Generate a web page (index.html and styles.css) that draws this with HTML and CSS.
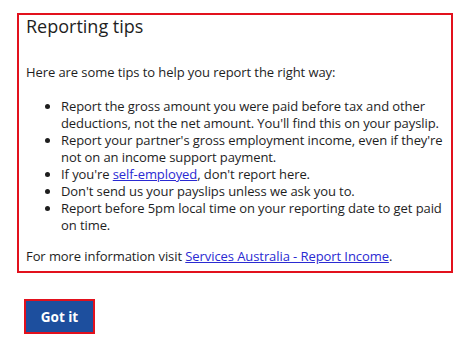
FILE: index.html
```html
<!DOCTYPE html>
<html lang="en">
<head>
<meta charset="utf-8">
<title>Reporting tips</title>
<link rel="stylesheet" href="styles.css">
</head>
<body>
<main class="page">
  <section class="tips">
    <h2 class="tips-title">Reporting tips</h2>
    <p class="tips-intro">Here are some tips to help you report the right way:</p>
    <ul class="tips-list">
      <li>Report the gross amount you were paid before tax and other deductions, not the net amount. You'll find this on your payslip.</li>
      <li>Report your partner's gross employment income, even if they're not on an income support payment.</li>
      <li>If you're <a href="#">self-employed</a>, don't report here.</li>
      <li>Don't send us your payslips unless we ask you to.</li>
      <li>Report before 5pm local time on your reporting date to get paid on time.</li>
    </ul>
    <p class="tips-more">For more information visit <a href="#">Services Australia - Report Income</a>.</p>
  </section>
  <div class="actions">
    <button class="btn-primary" type="button">Got it</button>
  </div>
</main>
</body>
</html>
```
FILE: styles.css
```css
html, body {
  margin: 0;
  padding: 0;
  background: #ffffff;
}
body {
  font-family: "Open Sans", "Noto Sans", sans-serif;
  color: #1e1e1e;
}
.page {
  padding: 13px 21px 0 17px;
}
.tips {
  border: 2px solid #e2111d;
  padding: 0 8px 6px 7px;
}
.tips-title {
  margin: 0;
  font-size: 18px;
  font-weight: 400;
  line-height: 22px;
}
.tips-intro,
.tips-list,
.tips-more {
  font-size: 13px;
  line-height: 17px;
  letter-spacing: -0.08px;
}
.tips-intro {
  margin: 27px 0 0;
}
.tips-list {
  margin: 17px 0 0;
  padding-left: 35px;
}
.tips-more {
  margin: 14px 0 0;
}
a {
  color: #2a2ad2;
  text-decoration: underline;
}
.actions {
  padding: 26px 0 0 7px;
}
.btn-primary {
  display: block;
  font-family: "Open Sans", sans-serif;
  font-size: 13.5px;
  font-weight: 700;
  color: #ffffff;
  background: #1d4f9e;
  border: 2px solid #e2111d;
  width: 71px;
  height: 35px;
  padding: 1px 0 0;
}
```
